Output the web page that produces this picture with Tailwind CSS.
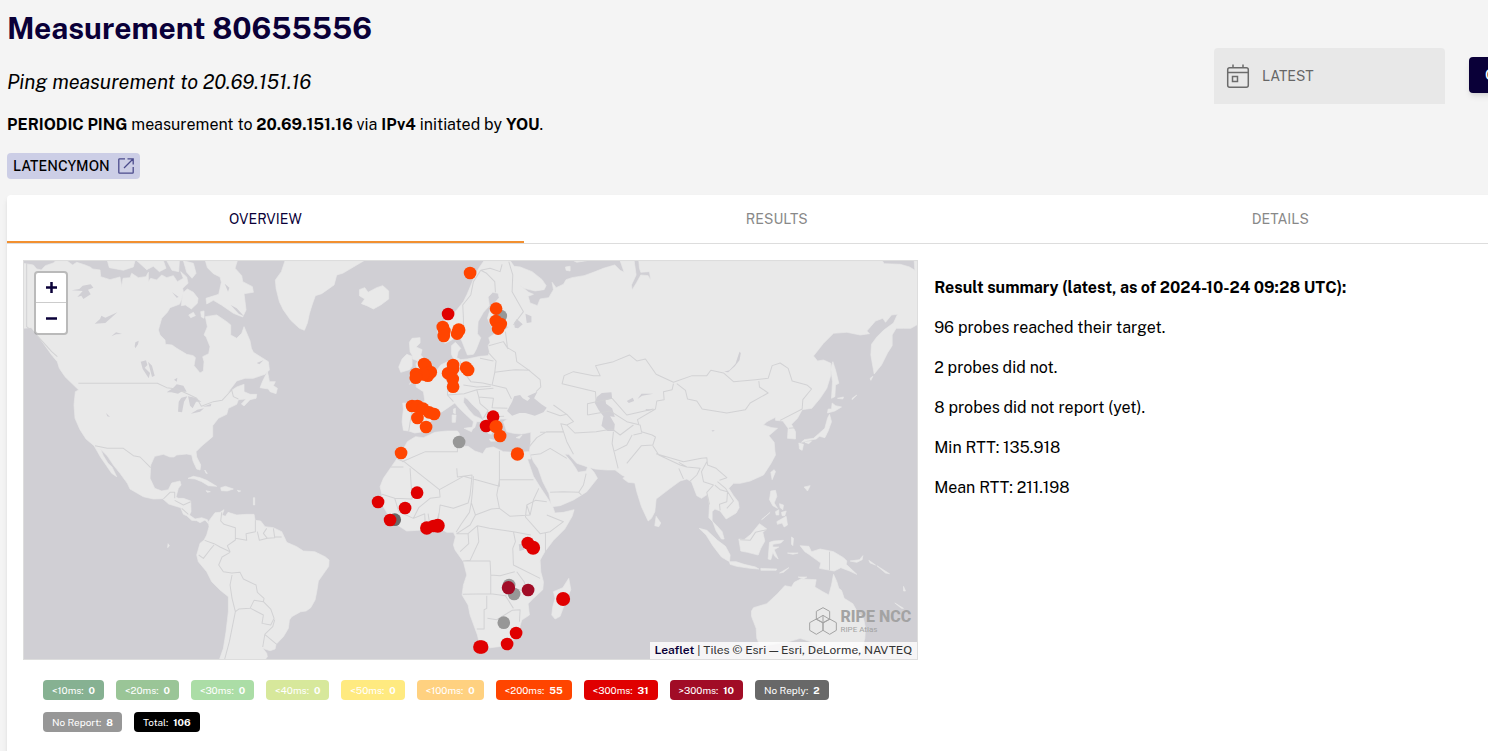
<!DOCTYPE html>
<html lang="en">
<head>
<meta charset="utf-8">
<title>Measurement 80655556</title>
<script src="https://cdn.jsdelivr.net/npm/@tailwindcss/browser@4"></script>
</head>
<body class="min-h-screen overflow-x-hidden bg-[#f4f4f4] pl-[7px] font-['Public_Sans',Inter,'Liberation_Sans',sans-serif] text-base text-black">
<div class="flex min-h-screen w-[calc(100%+43px)] flex-col">
  <header class="flex items-start justify-between">
    <div class="pt-2">
      <h1 class="text-3xl leading-10 font-bold text-[#0a0038]">Measurement 80655556</h1>
      <p class="mt-5 text-xl leading-7 italic">Ping measurement to 20.69.151.16</p>
      <p class="mt-[17px] leading-6"><b>PERIODIC PING</b> measurement to <b>20.69.151.16</b> via <b>IPv4</b> initiated by <b>YOU</b>.</p>
      <a href="#latencymon" class="mt-4 inline-flex h-[26px] items-center gap-2 rounded bg-[#cccee6] px-1.5 text-sm font-medium">LATENCYMON
        <svg class="size-4" viewBox="0 0 16 16" fill="none" stroke="#4b4b8c" stroke-width="1.3"><path d="M7 .8H1.6a.8.8 0 0 0-.8.8v12.8c0 .4.4.8.8.8h12.8c.4 0 .8-.4.8-.8V9M9.500 .8h5.700v5.700M15 1 6 10"/></svg>
      </a>
    </div>
    <div class="mt-12 flex items-start gap-6">
      <label class="flex h-14 w-[231px] items-center gap-3 rounded-t bg-[#e8e8e8] px-3 text-[#666]">
        <svg class="size-6 shrink-0" viewBox="0 0 24 24" fill="none" stroke="#6b6b6b" stroke-width="1.500"><rect x="1.700" y="3.700" width="20.600" height="19.500" rx="2"/><path d="M2 8.500h20M7 .5v3M17 .5v3"/><rect x="6.500" y="12.500" width="5" height="5"/></svg>
        <input aria-label="Time" value="LATEST" readonly class="w-full bg-transparent text-sm outline-none">
      </label>
      <button class="mt-[9px] h-9 w-[62px] rounded bg-[#0a0038] pl-4 text-left text-sm font-medium text-white shadow-md">GO</button>
    </div>
  </header>

  <main class="mt-4 flex-1 rounded-t bg-white pb-4 shadow-md">
    <nav class="flex h-[49px] border-b border-[#ddd] text-sm">
      <button class="flex-auto px-3 text-[#0a0038] shadow-[inset_0_-2px_#f29030]">OVERVIEW</button>
      <button class="flex-auto px-3 text-[#888]">RESULTS</button>
      <button class="flex-auto px-3 text-[#888]">DETAILS</button>
    </nav>
    <div class="flex gap-4 p-4">
      <section class="w-3/5 shrink-0">
        <div class="relative h-[400px] overflow-hidden border border-[#ddd] bg-[#d0cfd4]">
          <svg class="size-full" viewBox="12 18 2679 1194" preserveAspectRatio="xMidYMid slice" role="img" aria-label="World map of probes">
            <g fill="#e9e9e9" stroke="#e9e9e9" stroke-width="2" stroke-linejoin="round">
              <!-- North and Central America -->
              <path d="M10 25 40 30 50 42 64 45 76 32 100 24 108 17 140 17 158 30 170 22 195 30 210 36 218 42 240 45 242 65 270 74 300 66 305 95 309 70 330 68 335 55 355 68 378 65 385 52 385 80 392 70 410 75 425 60 440 68 460 62 472 80 490 70 482 50 500 66 504 85 488 100 490 112 484 135 478 148 450 158 442 172 425 190 415 225 420 240 435 255 436 268 456 270 470 280 500 298 520 302 526 308 522 332 540 354 550 348 552 320 548 305 566 296 570 275 558 245 552 240 562 215 556 185 590 180 620 200 632 210 632 240 650 250 665 235 672 215 690 258 694 280 700 292 745 320 748 345 735 358 700 370 675 370 650 378 630 404 622 415 650 396 672 388 672 410 690 418 710 418 708 430 690 434 672 453 664 447 678 432 655 434 650 448 625 460 620 478 595 490 578 512 578 545 545 573 528 590 530 606 542 630 540 645 530 642 519 618 515 600 500 597 470 600 462 606 450 606 430 598 404 604 392 630 390 670 404 700 425 708 445 704 455 684 480 678 483 690 475 700 468 725 474 730 490 730 512 738 513 770 508 780 525 792 545 788 562 794 565 806 555 795 540 803 530 797 515 796 500 782 490 778 482 758 446 747 428 731 400 732 370 725 330 702 322 685 300 655 280 630 262 603 242 583 250 602 264 625 276 636 290 665 275 655 258 630 242 607 222 572 198 552 180 524 165 490 162 450 166 410 176 405 135 365 118 340 112 320 95 300 70 265 50 238 34 218 10 220Z"/>
              <path d="M262 17 345 17 340 36 310 46 268 38ZM350 17 430 17 438 40 418 50 400 34 380 44ZM440 17 478 17 476 50 456 46ZM490 17 520 25 528 55 516 70 500 52ZM556 17 652 17 645 40 665 62 668 80 697 95 700 112 672 116 678 165 668 186 640 175 604 150 580 136 560 147 558 130 596 118 604 82 600 66 580 56 562 38ZM488 114 502 102 520 112 534 130 532 145 514 162 496 150 484 152ZM506 180 520 172 526 182 512 188ZM542 170 552 168 552 190 544 186Z"/>
              <path d="M742 350 728 378 720 398 745 402 750 410 768 416 772 400 760 392 766 380 748 380 746 368ZM795 17 1032 17 1000 36 968 55 950 60 942 90 905 116 886 122 876 150 868 176 862 204 853 226 838 220 812 196 790 165 778 140 768 100 766 75 784 50Z"/>
              <!-- South America and the Caribbean -->
              <path d="M565 800 585 773 600 772 612 764 606 780 616 784 624 772 650 780 680 778 702 778 705 796 722 798 735 815 760 818 785 830 800 862 830 875 850 888 884 890 915 905 927 915 926 934 895 978 890 1010 885 1035 872 1058 858 1068 842 1070 815 1085 808 1095 805 1120 790 1145 768 1168 765 1182 750 1187 728 1180 740 1195 742 1205 735 1214 598 1214 610 1180 618 1130 625 1070 625 1025 600 1005 575 980 560 950 535 920 530 900 540 865 552 855 560 840 567 815ZM504 670 520 664 540 668 560 676 590 694 565 692 545 680 525 672ZM602 698 616 694 640 702 622 708 604 707ZM652 706 662 708 656 711ZM558 707 571 710 562 712ZM554 645 562 655 558 655ZM700 728 704 728 704 750 700 750ZM444 866 448 872 443 878Z"/>
              <!-- Europe, Asia and the Arabian peninsula -->
              <path d="M1392 17 1376 40 1365 60 1355 85 1340 120 1330 140 1310 165 1290 188 1262 205 1252 222 1258 255 1275 265 1295 255 1312 238 1322 250 1330 270 1342 300 1360 298 1368 284 1382 248 1372 236 1374 200 1390 172 1408 152 1404 126 1418 112 1434 115 1437 128 1412 158 1402 190 1410 208 1424 224 1456 212 1466 216 1450 228 1430 232 1406 248 1410 262 1404 272 1408 290 1404 302 1380 304 1342 312 1322 314 1310 308 1314 290 1322 280 1306 262 1294 272 1294 298 1302 314 1282 320 1262 330 1250 346 1232 362 1210 376 1188 384 1188 396 1210 410 1214 436 1204 450 1172 446 1148 444 1150 462 1146 500 1150 526 1166 528 1184 534 1210 530 1226 510 1236 492 1246 480 1266 470 1284 458 1304 444 1316 458 1336 478 1360 500 1356 522 1364 518 1370 500 1388 500 1384 492 1362 482 1346 464 1330 442 1332 426 1342 432 1358 450 1378 468 1388 488 1392 510 1404 535 1414 538 1418 524 1410 510 1424 502 1442 492 1462 492 1450 500 1454 512 1460 530 1480 535 1504 537 1532 532 1532 560 1528 590 1540 620 1554 640 1568 680 1586 715 1595 755 1620 752 1660 735 1700 710 1732 670 1722 652 1704 632 1698 648 1674 652 1666 638 1650 615 1634 598 1646 598 1670 625 1700 635 1725 642 1760 645 1785 645 1805 660 1815 665 1808 670 1824 682 1844 684 1850 710 1864 755 1884 798 1894 790 1904 770 1908 732 1950 700 1980 678 2000 672 2014 680 2030 722 2044 730 2062 718 2068 750 2066 788 2078 800 2088 828 2104 852 2112 852 2106 830 2090 812 2076 798 2076 770 2084 762 2100 768 2118 792 2148 774 2157 758 2154 740 2140 722 2126 700 2140 685 2160 685 2190 678 2230 660 2252 626 2266 600 2264 586 2262 562 2246 542 2272 520 2255 518 2230 510 2240 500 2266 487 2266 496 2288 498 2304 520 2302 550 2326 552 2326 530 2314 508 2332 490 2346 464 2375 460 2400 430 2420 400 2432 360 2432 325 2410 315 2392 318 2380 303 2410 265 2440 235 2480 232 2520 240 2548 236 2540 228 2566 198 2588 190 2596 202 2614 180 2632 178 2620 204 2590 226 2570 246 2554 268 2552 300 2562 357 2584 330 2602 294 2616 272 2616 240 2628 220 2650 220 2672 220 2693 208 2693 17 2682 17 2684 46 2668 36 2640 28 2592 26 2586 17 1856 17 1858 40 1862 52 1888 50 1892 76 1884 62 1862 60 1850 82 1836 105 1834 90 1848 60 1842 17 1800 17 1812 52 1800 46 1784 30 1750 40 1720 52 1692 62 1656 68 1638 74 1630 88 1608 98 1596 82 1600 104 1586 128 1560 132 1552 152 1530 144 1524 124 1540 118 1526 112 1500 92 1512 100 1545 108 1572 104 1578 92 1566 74 1536 50 1500 36 1482 34 1470 17Z"/>
              <path d="M1018 104 1034 98 1044 112 1070 98 1088 92 1106 108 1106 132 1082 150 1060 162 1040 152 1024 146 1034 132 1018 122ZM1168 262 1176 250 1200 248 1200 264 1188 276 1206 284 1202 300 1216 316 1226 338 1248 346 1240 362 1214 370 1190 374 1168 388 1184 366 1174 358 1190 346 1188 326 1194 318 1178 312 1176 300 1170 290ZM1146 312 1160 298 1176 304 1176 334 1168 344 1142 352 1136 336ZM1296 480 1308 480 1306 502 1296 502ZM1300 462 1306 460 1306 476 1300 474ZM1332 520 1360 516 1354 530ZM1408 552 1432 558 1412 559ZM1488 548 1506 540 1498 550ZM1636 36 1650 34 1650 48 1638 46ZM1670 22 1700 17 1660 17Z"/>
              <!-- Africa and Madagascar -->
              <path d="M1148 585 1162 560 1186 545 1210 548 1244 532 1280 528 1312 528 1318 536 1316 560 1322 574 1344 574 1364 588 1388 596 1398 580 1420 576 1450 590 1480 592 1528 590 1532 612 1522 612 1540 664 1560 696 1584 732 1600 760 1604 774 1630 772 1662 764 1656 784 1634 822 1600 856 1574 890 1560 915 1562 950 1570 980 1568 1004 1540 1030 1524 1046 1528 1080 1505 1095 1500 1112 1498 1132 1480 1155 1460 1172 1410 1178 1380 1176 1372 1140 1350 1080 1344 1050 1326 1020 1330 990 1340 960 1330 920 1305 885 1300 870 1306 845 1300 832 1280 832 1260 820 1220 824 1160 828 1138 814 1115 800 1096 765 1080 740 1086 720 1080 695 1090 670 1112 638 1130 612ZM1646 970 1652 1004 1636 1040 1620 1084 1605 1092 1595 1080 1598 1055 1605 1030 1600 1010 1628 998Z"/>
              <!-- Asian and Pacific islands -->
              <path d="M1908 784 1922 804 1916 815 1904 812ZM2422 474 2424 462 2434 462 2436 444 2446 452 2464 456 2444 468ZM2428 478 2434 500 2424 528 2414 548 2398 544 2388 552 2368 556 2344 562 2352 554 2380 550 2396 536 2414 520 2422 490ZM2336 564 2350 568 2346 586 2338 582ZM2354 562 2374 558 2366 566ZM2438 320 2446 345 2456 385 2446 390 2444 425 2434 430 2437 380 2432 340ZM2252 652 2262 644 2266 650 2256 674ZM2352 696 2370 692 2362 708ZM2452 430 2470 426 2468 432ZM2496 430 2510 420 2496 434ZM2550 370 2558 364 2552 376ZM2252 708 2266 706 2270 724 2262 744 2272 760 2258 752 2248 734ZM2278 746 2290 750 2288 764 2280 758ZM2266 770 2276 764 2276 780 2268 780ZM2284 772 2298 768 2294 782 2286 782ZM2270 800 2298 784 2302 810 2292 816 2286 804 2272 808ZM2224 794 2250 772 2230 790ZM2156 852 2172 854 2192 838 2218 806 2240 822 2228 832 2234 858 2222 880 2214 900 2182 892 2162 888ZM2037 820 2060 826 2092 856 2116 874 2130 900 2128 920 2104 906 2078 872 2058 840ZM2128 920 2148 920 2172 928 2206 936 2216 942 2190 940 2150 934 2130 928ZM2222 940 2270 942 2268 946 2222 946ZM2278 954 2306 938 2290 952ZM2248 862 2260 858 2290 856 2282 864 2258 868 2258 876 2276 876 2262 884 2274 912 2264 904 2258 892 2252 914 2244 912ZM2314 846 2320 850 2318 872 2314 868ZM2302 894 2334 894 2318 898ZM2340 872 2366 874 2374 890 2400 882 2440 890 2470 908 2480 918 2478 928 2510 958 2488 948 2462 938 2442 948 2398 940 2402 924 2366 898 2354 890ZM2490 918 2518 914 2528 902 2526 914 2510 922ZM2546 916 2566 930 2550 924ZM2570 932 2608 956 2596 954ZM2624 1044 2650 1060 2644 1060ZM2650 994 2656 1008 2650 1008ZM2334 966 2360 966 2350 972ZM2194 1068 2200 1058 2240 1046 2272 1016 2294 992 2314 996 2322 982 2342 972 2388 974 2384 996 2408 1010 2426 1020 2434 990 2440 958 2450 980 2456 1000 2464 1006 2472 1030 2498 1046 2510 1068 2530 1090 2536 1120 2534 1150 2524 1190 2518 1214 2440 1214 2410 1180 2390 1166 2340 1150 2300 1162 2220 1174 2210 1150 2208 1120 2194 1084Z"/>
            </g>
            <!-- Inland seas and lakes -->
            <path fill="#d0cfd4" d="M155 106 178 102 188 92 212 88 220 98 204 104 212 118 190 132 184 122 172 126 188 108ZM224 206 240 192 244 182 256 188 292 172 272 190 256 204ZM274 244 288 232 306 237 288 238ZM344 274 346 262 356 257 354 268 346 280ZM362 320 378 316 382 330 374 338 390 354 386 370 368 342ZM384 320 396 332 404 362 396 366ZM440 412 460 398 470 388 490 392 500 410 484 410 474 416 454 412ZM476 440 484 428 502 424 492 440 486 472 474 470ZM504 424 526 428 544 440 528 440 518 460 510 452ZM512 476 532 464 552 460 540 470ZM548 455 574 446 572 454ZM258 474 270 486 262 484ZM462 374 472 368 470 380ZM614 86 628 98 624 110ZM632 150 650 160 672 184 656 176ZM456 112 476 126 470 128ZM710 324 730 316 718 328ZM1461 468 1476 440 1482 424 1500 420 1508 430 1522 438 1530 430 1522 424 1552 410 1542 430 1564 448 1580 458 1570 472 1544 482 1516 474 1498 474 1476 482ZM1724 444 1730 426 1745 414 1774 412 1776 430 1756 436 1758 446 1776 460 1784 486 1770 484 1784 508 1782 528 1762 528 1744 512 1750 484 1736 466ZM1820 438 1838 428 1842 438 1826 444ZM1482 204 1490 192 1508 208 1494 220 1484 218ZM1516 176 1534 184 1534 202 1520 204ZM2112 350 2128 346 2146 326 2158 290 2162 294 2158 316 2144 334 2124 352ZM1852 432 1864 416 1900 416 1866 422ZM1876 462 1898 464 1880 468ZM2074 526 2084 526 2078 530ZM1496 868 1512 866 1512 884 1498 888ZM1636 596 1658 616 1668 632 1650 614Z"/>
            <!-- Country borders -->
            <g fill="none" stroke="#d2d2d4" stroke-width="3" stroke-linejoin="round">
              <path d="M20 25V215L45 235 70 262 95 290 112 305M175 385H412L440 398 470 402 505 418 530 430 544 454 580 440 606 436 635 405 640 425 655 432M225 572 262 580 310 580 340 602 360 606 392 638M430 732 450 712H464V730M464 736 490 750 512 740M485 760 505 778M605 772 602 798 612 808 646 818V855L622 872 630 890 600 876 582 866 554 856M646 850 680 856 678 836 706 830 706 796M740 820 730 835 742 850 718 856 712 830M760 820 764 848 742 850M764 846 785 846M582 870 570 884 550 910 536 900M630 892 606 906 596 930 610 950 635 954 660 952 670 972 708 990 712 1012 732 1030 730 1040 702 1036 690 1060 656 1062 646 1070 636 1030 630 990 636 960M692 1060 730 1080 726 1105 752 1110 762 1090 752 1062 730 1040M764 1094 758 1115 734 1138 770 1168M734 1140 728 1176M646 1070 640 1100 628 1160 614 1212"/>
              <path d="M1382 46 1360 80 1352 120 1328 150 1330 190 1330 230M1426 112 1424 80 1398 54 1382 46 1410 40 1440 50 1446 28M1466 20 1478 60 1476 110 1510 170 1480 210M1456 230 1462 278 1486 292 1490 320 1524 344 1560 374 1562 396 1548 410M1406 272 1450 260 1464 282M1404 292 1428 318 1424 352 1416 390 1458 400 1474 432M1380 310 1420 318M1320 318 1330 350 1352 380 1388 384 1414 390M1330 390 1370 396 1412 394M1284 330 1270 356 1284 384 1282 420 1300 440M1204 450 1248 474M1158 458 1176 464 1166 528M1282 420 1332 416 1370 404 1420 400M1370 404 1376 426 1420 430 1416 458 1462 460M1376 426 1380 446 1404 466 1400 486 1452 484M1404 466 1390 490M1424 352 1486 344 1530 346M1600 450 1640 478 1620 482 1580 468M1640 478 1660 500 1640 510 1622 506 1630 530 1560 532M1640 510 1664 534 1728 530 1776 522M1728 440 1726 410 1626 386 1632 362 1660 350 1720 362 1740 362 1726 332 1780 320 1828 300 1850 318 1876 312 1908 358 1960 382 2016 362 2060 362 2072 346 2110 354 2140 380 2206 374 2244 370 2256 332 2280 324 2304 340 2316 378 2360 390 2374 402 2348 434 2346 462 2280 496M1970 386 1996 406 2002 432 2030 438 2046 462 2120 474 2176 464 2190 444 2244 414 2218 396 2216 378M1960 386 1956 404 1930 410 1932 434 1910 438 1906 462 1852 494 1856 508M1776 430 1820 480 1900 462M1702 480V446L1776 430M1702 480 1770 468 1820 500 1860 510 1864 530 1896 540 1906 546 1898 570 1864 572 1820 625M1776 522 1800 540 1840 510M1840 540 1866 534M1836 540 1820 570 1780 590M1780 530 1776 566 1794 640M1898 572 1916 600 1980 630 2000 636M1908 596 1990 620 2044 610 2060 608 2062 630 2088 640 2120 668 2098 676M1976 622 2000 636 2040 640 2030 660 2010 678M1976 640 1990 672M2060 620 2044 650 2050 680 2080 690 2060 712 2068 748M2084 690 2100 704 2122 710 2120 740 2098 748 2100 766M2092 680 2116 700 2140 738 2120 760M1528 574 1550 548 1580 530 1630 530 1640 560 1660 598M1532 600 1562 596 1590 580 1640 610M1590 712 1630 710 1676 712 1690 690 1698 656M1676 712 1684 720M2428 890V946M2160 854 2190 856 2206 832 2240 824M2306 520 2324 518"/>
              <path d="M1312 548 1312 590 1216 590 1146 620M1150 636H1112M1132 612 1152 620 1258 704 1330 664 1438 694 1438 588M1438 674H1540M1170 640 1176 732 1124 730 1086 718M1258 704 1260 726 1230 730 1196 758 1180 790 1136 770 1124 730M1310 640 1312 666 1356 660 1350 720 1344 744 1300 760 1260 750 1254 800M1360 664 1358 700 1354 740 1348 772 1324 806 1308 832M1438 674 1430 720 1438 760 1470 784 1530 780 1540 734 1556 700M1354 744 1366 780 1414 762 1438 760M1366 780 1350 810 1310 836 1344 836 1372 812 1408 820 1480 830 1532 840M1530 780 1520 750 1546 736 1580 740M1520 750 1516 786 1560 836 1590 830 1630 800 1580 780M1576 834V890M1480 830 1486 860 1478 880 1480 930 1560 970M1344 836 1346 866 1320 890M1372 812 1376 860 1350 916 1328 918M1340 918H1410L1412 960 1440 962 1484 950M1412 960V1016L1328 1018M1412 1016 1456 1022 1484 1000 1520 1010 1512 980 1490 950M1400 1022V1060L1392 1064V1122L1370 1122M1402 1090 1430 1094 1476 1066 1500 1064 1498 1100M1456 1022 1480 1060M1216 826 1214 776M1232 826 1224 776M1246 822 1256 776M1180 790 1214 776"/>
            </g>
            <!-- Probes -->
            <g fill="#979797"><circle cx="1442" cy="183" r="19"/><circle cx="1317" cy="561" r="19"/><circle cx="1467" cy="990" r="19"/><circle cx="1482" cy="1017" r="19"/><circle cx="1451" cy="1103" r="19"/></g>
            <circle cx="1124" cy="794" r="19" fill="#686868"/>
            <g fill="#e00000"><circle cx="1284" cy="177" r="19"/><circle cx="1419" cy="485" r="19"/><circle cx="1398" cy="513" r="19"/><circle cx="1074" cy="741" r="19"/><circle cx="1191" cy="713" r="19"/><circle cx="1155" cy="759" r="19"/><circle cx="1110" cy="795" r="19"/><circle cx="1220" cy="819" r="20"/><circle cx="1240" cy="813" r="19"/><circle cx="1253" cy="812" r="21"/><circle cx="1523" cy="864" r="19"/><circle cx="1539" cy="878" r="21"/><circle cx="1629" cy="1032" r="21"/><circle cx="1488" cy="1134" r="19"/><circle cx="1461" cy="1167" r="19"/><circle cx="1379" cy="1176" r="20"/><circle cx="1385" cy="1176" r="20"/></g>
            <g fill="#ff4500">
              <circle cx="1350" cy="54" r="19"/><circle cx="1428" cy="161" r="19"/><circle cx="1427" cy="198" r="19"/><circle cx="1442" cy="207" r="19"/><circle cx="1434" cy="221" r="19"/><circle cx="1268" cy="216" r="19"/><circle cx="1273" cy="228" r="19"/><circle cx="1271" cy="243" r="19"/><circle cx="1316" cy="225" r="20"/><circle cx="1311" cy="236" r="19"/>
              <circle cx="1212" cy="327" r="19"/><circle cx="1217" cy="332" r="19"/><circle cx="1231" cy="352" r="20"/><circle cx="1223" cy="362" r="19"/><circle cx="1209" cy="358" r="19"/><circle cx="1188" cy="357" r="19"/><circle cx="1187" cy="368" r="19"/>
              <circle cx="1299" cy="330" r="19"/><circle cx="1299" cy="341" r="19"/><circle cx="1284" cy="355" r="19"/><circle cx="1298" cy="372" r="19"/><circle cx="1299" cy="395" r="19"/><circle cx="1338" cy="338" r="19"/><circle cx="1344" cy="345" r="19"/>
              <circle cx="1176" cy="453" r="19"/><circle cx="1192" cy="454" r="20"/><circle cx="1209" cy="461" r="19"/><circle cx="1192" cy="489" r="19"/><circle cx="1227" cy="472" r="19"/><circle cx="1242" cy="477" r="19"/><circle cx="1218" cy="516" r="19"/><circle cx="1428" cy="515" r="20"/><circle cx="1440" cy="543" r="19"/><circle cx="1143" cy="594" r="19"/><circle cx="1492" cy="597" r="20"/>
            </g>
            <g fill="#a10c26"><circle cx="1465" cy="998" r="20"/><circle cx="1524" cy="1005" r="19"/></g>
          </svg>
          <div class="absolute top-2.5 left-2.5 flex w-[34px] flex-col rounded border-2 border-black/20 bg-white bg-clip-padding text-[#0a0038]">
            <button aria-label="Zoom in" class="flex h-[30px] items-center justify-center border-b border-[#ccc]"><svg class="size-[11px]" viewBox="0 0 11 11" stroke="currentColor" stroke-width="2.500"><path d="M0 5.500h11M5.500 0v11"/></svg></button>
            <button aria-label="Zoom out" class="flex h-[30px] items-center justify-center"><svg class="size-[11px]" viewBox="0 0 11 11" stroke="currentColor" stroke-width="2.500"><path d="M0 5.500h11"/></svg></button>
          </div>
          <div class="absolute right-1.5 bottom-6 flex items-center gap-1 text-[#a3a3a3]">
            <svg class="h-7 w-7" viewBox="0 0 84 84" fill="none" stroke="currentColor" stroke-width="3" stroke-linejoin="round"><path d="M42 2 62 13V37L42 48 22 37V13ZM22 36 42 47V70L22 82 2 70V47ZM62 36 82 47V70L62 82 42 70V47ZM42 25 62 37M42 25 22 37M42 25V47"/></svg>
            <div class="font-['Roboto',sans-serif]"><div class="text-base leading-4 font-extrabold">RIPE NCC</div><div class="text-[8px] leading-[9px]">RIPE Atlas</div></div>
          </div>
          <div class="absolute right-0 bottom-0 bg-white/80 px-[5px] text-xs leading-[17px] text-[#333]"><a href="#leaflet" class="font-semibold text-[#0a0038]">Leaflet</a> | Tiles © Esri — Esri, DeLorme, NAVTEQ</div>
        </div>
        <ul class="mx-5 mt-5 flex flex-wrap gap-3 text-[10px] leading-5 text-white *:flex *:gap-[5px] *:rounded *:px-[9px]">
          <li class="bg-[#86b192]">&lt;10ms: <b>0</b></li>
          <li class="bg-[#9ac597]">&lt;20ms: <b>0</b></li>
          <li class="bg-[#abdda6]">&lt;30ms: <b>0</b></li>
          <li class="bg-[#d7e89b]">&lt;40ms: <b>0</b></li>
          <li class="bg-[#ffea80]">&lt;50ms: <b>0</b></li>
          <li class="bg-[#ffd180]">&lt;100ms: <b>0</b></li>
          <li class="bg-[#ff4500]">&lt;200ms: <b>55</b></li>
          <li class="bg-[#e00000]">&lt;300ms: <b>31</b></li>
          <li class="bg-[#a10c26]">&gt;300ms: <b>10</b></li>
          <li class="bg-[#686868]">No Reply: <b>2</b></li>
          <li class="bg-[#979797]">No Report: <b>8</b></li>
          <li class="bg-black">Total: <b>106</b></li>
        </ul>
      </section>
      <section class="flex flex-col gap-4 pt-4 leading-6">
        <h2 class="font-bold">Result summary (latest, as of 2024-10-24 09:28 UTC):</h2>
        <p>96 probes reached their target.</p>
        <p>2 probes did not.</p>
        <p>8 probes did not report (yet).</p>
        <p>Min RTT: 135.918</p>
        <p>Mean RTT: 211.198</p>
      </section>
    </div>
  </main>
</div>
</body>
</html>
